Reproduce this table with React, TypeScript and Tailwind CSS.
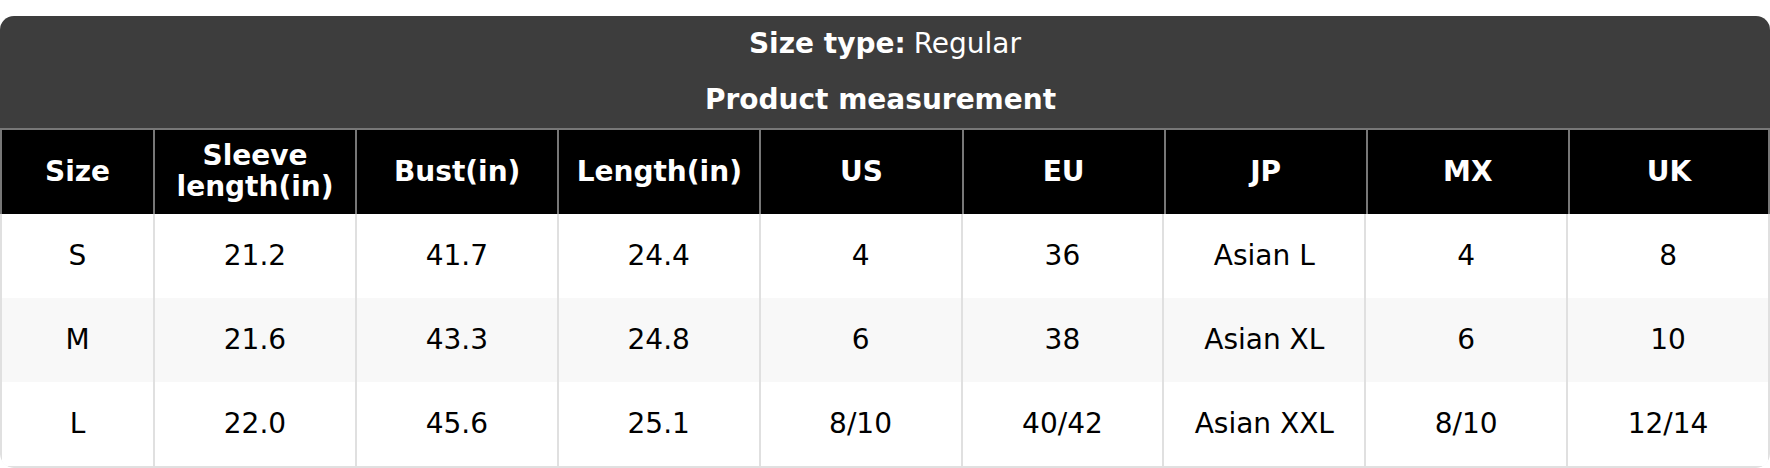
import React from 'react';

const headers = ['Size', 'Sleeve length(in)', 'Bust(in)', 'Length(in)', 'US', 'EU', 'JP', 'MX', 'UK'];

const rows = [
  ['S', '21.2', '41.7', '24.4', '4', '36', 'Asian L', '4', '8'],
  ['M', '21.6', '43.3', '24.8', '6', '38', 'Asian XL', '6', '10'],
  ['L', '22.0', '45.6', '25.1', '8/10', '40/42', 'Asian XXL', '8/10', '12/14'],
];

const App = () => {
  return (
    <div className="w-[1770px] h-[468px] bg-white pt-4 font-['DejaVu_Sans',sans-serif]">
      <div className="rounded-[14px] overflow-hidden">
        {/* title band */}
        <div className="bg-[#3d3d3d] text-white h-[112px] flex flex-col">
          <div className="h-[56px] flex items-center justify-center text-[28px]">
            <span className="font-bold mr-2">Size type:</span>
            <span>Regular</span>
          </div>
          <div className="h-[56px] flex items-center justify-center text-[28px] font-bold pr-[9px]">
            Product measurement
          </div>
        </div>

        {/* column headings */}
        <div className="grid grid-cols-[153px_repeat(8,1fr)] bg-black text-white border-t-2 border-[#777]">
          {headers.map((h, i) => (
            <div
              key={h}
              className={`h-[84px] flex items-center justify-center text-center text-[28px] font-bold leading-[1.1] px-1 border-l-2 border-[#777] ${i === headers.length - 1 ? 'border-r-2' : ''}`}
            >
              {h === 'Sleeve length(in)' ? (
                <span>Sleeve<br />length(in)</span>
              ) : (
                h
              )}
            </div>
          ))}
        </div>

        {/* body */}
        <div className="border-x-2 border-b-2 border-[#e0e0e0] rounded-b-[14px]">
          {rows.map((r, ri) => (
            <div
              key={r[0]}
              className={`grid grid-cols-[151px_repeat(8,1fr)] ${ri === 1 ? 'bg-[#f8f8f8]' : 'bg-white'}`}
            >
              {r.map((c, ci) => (
                <div
                  key={ci}
                  className={`h-[84px] flex items-center justify-center text-[28px] text-black ${ci > 0 ? 'border-l-2 border-[#e0e0e0]' : ''}`}
                >
                  {c}
                </div>
              ))}
            </div>
          ))}
        </div>
      </div>
    </div>
  );
};

export default App;
